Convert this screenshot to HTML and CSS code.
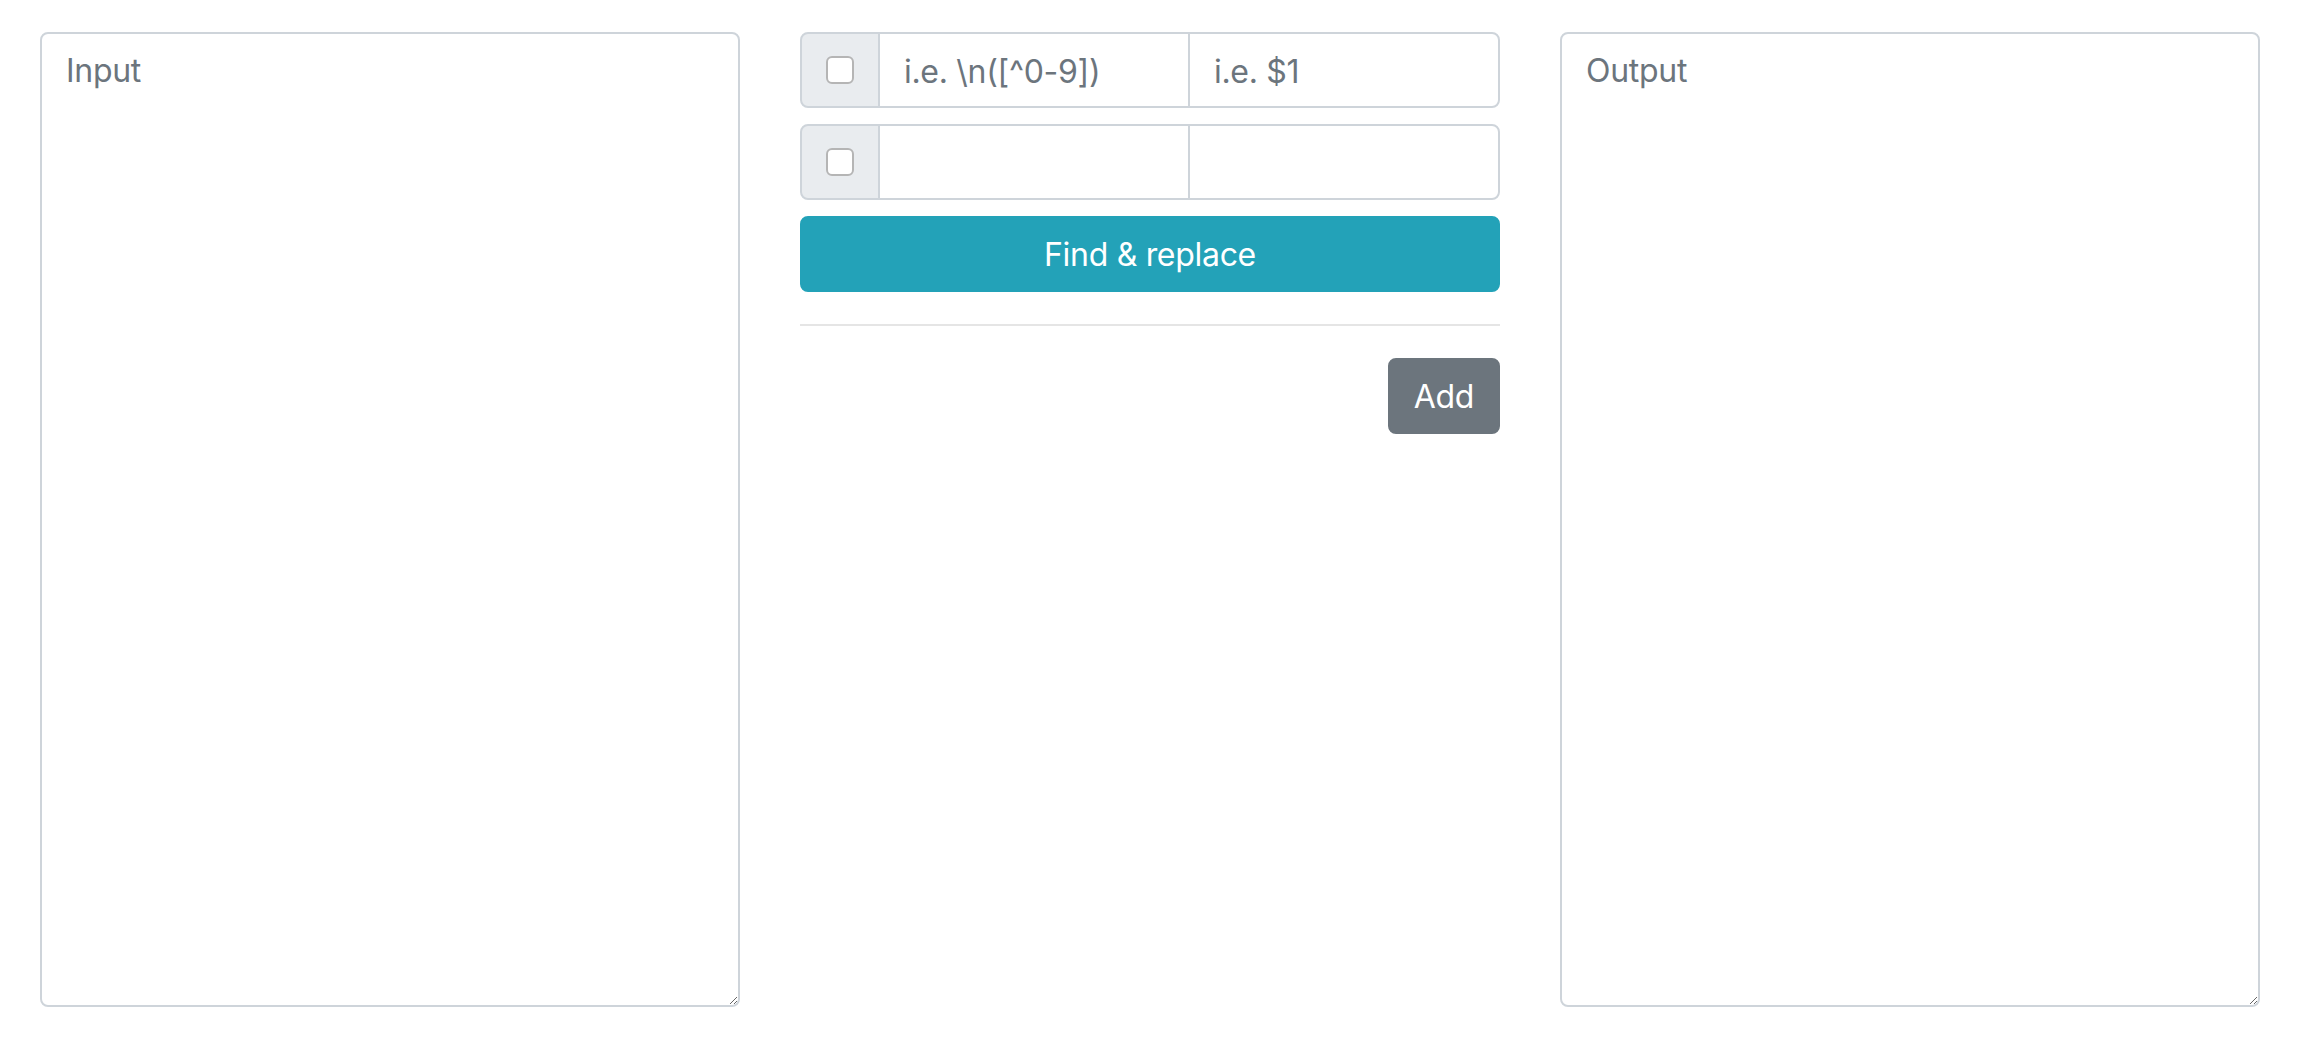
FILE: index.html
```html
<!DOCTYPE html>
<html lang="en">
<head>
    <meta charset="UTF-8">
    <meta name="viewport" content="width=device-width, initial-scale=1.0">
    <title>Find &amp; replace</title>
    <link rel="stylesheet" href="styles.css">
</head>
<body>
    <div class="row">
        <div class="col">
            <textarea class="form-control big" placeholder="Input"></textarea>
        </div>

        <div class="col">
            <!-- Regole di sostituzione -->
            <div class="input-group">
                <div class="input-group-prepend">
                    <input type="checkbox" class="check">
                </div>
                <input type="text" class="form-control find" placeholder="i.e. \n([^0-9])">
                <input type="text" class="form-control replace" placeholder="i.e. $1">
            </div>
            <div class="input-group">
                <div class="input-group-prepend">
                    <input type="checkbox" class="check">
                </div>
                <input type="text" class="form-control find">
                <input type="text" class="form-control replace">
            </div>
            <button class="btn btn-info btn-block">Find &amp; replace</button>
            <hr>
            <div class="actions">
                <button class="btn btn-secondary">Add</button>
            </div>
        </div>

        <div class="col">
            <textarea class="form-control big" placeholder="Output"></textarea>
        </div>
    </div>
</body>
</html>
```

FILE: styles.css
```css
* {
    margin: 0;
    padding: 0;
    box-sizing: border-box;
}

body {
    font-family: 'Inter', 'Helvetica Neue', Arial, sans-serif;
    font-size: 32px;
    line-height: 1.5;
    color: #212529;
    background: #fff;
}

.row {
    display: flex;
    padding: 32px 18px 0 10px;
}

.col {
    flex: 1 1 0;
    min-width: 0;
    padding: 0 30px;
}

.form-control {
    display: block;
    width: 100%;
    height: 76px;
    padding: 13px 24px 11px;
    font-family: inherit;
    font-size: 32px;
    line-height: 1.5;
    letter-spacing: -0.3px;
    color: #495057;
    background: #fff;
    border: 2px solid #ced4da;
    border-radius: 8px;
    outline: none;
}

.form-control::placeholder {
    color: #6c757d;
    opacity: 1;
}

textarea.big {
    height: 975px;
    resize: vertical;
}

.input-group {
    display: flex;
    margin-bottom: 16px;
}

.input-group-prepend {
    display: flex;
    align-items: center;
    justify-content: center;
    flex: 0 0 80px;
    height: 76px;
    background: #e9ecef;
    border: 2px solid #ced4da;
    border-radius: 8px 0 0 8px;
}

.check {
    appearance: none;
    -webkit-appearance: none;
    width: 28px;
    height: 28px;
    background: #fff;
    border: 2px solid #b5b5b5;
    border-radius: 6px;
    margin: 0;
}

.input-group .form-control {
    flex: 1 1 0;
    min-width: 0;
    width: auto;
    margin-left: -2px;
    border-radius: 0;
}

.input-group .replace {
    border-radius: 0 8px 8px 0;
}

.btn {
    display: inline-block;
    height: 76px;
    padding: 13px 24px 11px;
    font-family: inherit;
    font-size: 32px;
    line-height: 1.5;
    letter-spacing: -0.3px;
    color: #fff;
    border: 2px solid transparent;
    border-radius: 8px;
    cursor: pointer;
}

.btn-block {
    display: block;
    width: 100%;
}

.btn-info {
    background: #23a2b8;
    border-color: #23a2b8;
}

.btn-secondary {
    background: #6c757d;
    border-color: #6c757d;
}

hr {
    border: 0;
    border-top: 2px solid rgba(0, 0, 0, 0.1);
    margin: 32px 0;
}

.actions {
    display: flex;
    justify-content: flex-end;
}
```
